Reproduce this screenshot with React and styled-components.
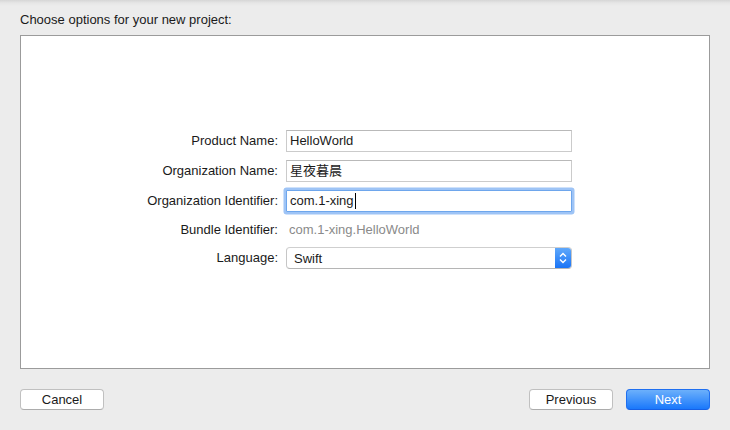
import styled, { createGlobalStyle } from 'styled-components';

const GlobalStyle = createGlobalStyle`
  html, body {
    margin: 0;
    padding: 0;
    background: #ececec;
    font-family: "Liberation Sans", "Noto Sans CJK SC", sans-serif;
    font-size: 13px;
    color: #1a1a1a;
  }
`;

const Sheet = styled.div`
  width: 730px;
  height: 430px;
  background: linear-gradient(#d6d6d6 0px, #e6e6e6 3px, #ececec 6px);
  display: flex;
  flex-direction: column;
`;

const Title = styled.div`
  height: 35px;
  padding-left: 20px;
  box-sizing: border-box;
  padding-top: 12px;
  line-height: 15px;
`;

const Panel = styled.div`
  margin: 0 20px 0 20px;
  width: 690px;
  height: 334px;
  box-sizing: border-box;
  background: #fff;
  border: 1px solid #9b9b9b;
  padding-top: 94px;
`;

const Form = styled.div`
  display: grid;
  grid-template-columns: 257px 286px;
  grid-template-rows: 22px 22px 22px 19px 22px;
  column-gap: 8px;
  row-gap: 8px;
`;

const Label = styled.label`
  text-align: right;
  align-self: center;
  line-height: 16px;
`;

const Field = styled.div`
  box-sizing: border-box;
  height: 22px;
  border: 1px solid ${p => (p.$focused ? '#6ea6ec' : '#cbcbcb')};
  border-top-color: ${p => (p.$focused ? '#6ea6ec' : '#b9b9b9')};
  box-shadow: ${p => (p.$focused ? '0 0 0 2.5px #9ec4f6' : 'none')};
  border-radius: ${p => (p.$focused ? '1px' : '0')};
  padding: 0 3px;
  display: flex;
  align-items: center;
  line-height: 16px;
  background: #fff;
`;

const Caret = styled.span`
  display: inline-block;
  width: 1px;
  height: 16px;
  background: #000;
  margin-left: 1px;
`;

const Plain = styled.div`
  align-self: center;
  color: #8a8a8a;
  padding-left: 3px;
  line-height: 16px;
`;

const Popup = styled.div`
  box-sizing: border-box;
  height: 22px;
  border: 1px solid #c6c6c6;
  border-top-color: #cfcfcf;
  border-bottom-color: #b5b5b5;
  border-radius: 4px;
  display: flex;
  align-items: stretch;
  overflow: hidden;
  background: #fff;
`;

const PopupText = styled.div`
  flex: 1;
  padding-left: 7px;
  display: flex;
  align-items: center;
`;

const Stepper = styled.div`
  width: 16px;
  background: linear-gradient(#5fa8fb, #1a74f6);
  display: flex;
  align-items: center;
  justify-content: center;
`;

const Footer = styled.div`
  display: flex;
  align-items: center;
  padding: 20px 20px 0 20px;
  gap: 13px;
`;

const Spacer = styled.div`
  flex: 1;
`;

const Button = styled.button`
  box-sizing: border-box;
  width: 84px;
  height: 21px;
  border-radius: 4px;
  font-family: inherit;
  font-size: 13px;
  padding: 0;
  line-height: 18px;
  border: 1px solid ${p => (p.$primary ? '#1f6ff0' : '#c0c0c0')};
  border-bottom-color: ${p => (p.$primary ? '#1660e6' : '#acacac')};
  color: ${p => (p.$primary ? '#fff' : '#1a1a1a')};
  background: ${p => (p.$primary ? 'linear-gradient(#6cb0fb, #1a78fb)' : '#fff')};
`;

export default function App() {
  return (
    <>
      <GlobalStyle />
      <Sheet>
        <Title>Choose options for your new project:</Title>
        <Panel>
          <Form>
            <Label>Product Name:</Label>
            <Field>HelloWorld</Field>
            <Label>Organization Name:</Label>
            <Field>星夜暮晨</Field>
            <Label>Organization Identifier:</Label>
            <Field $focused>
              com.1-xing
              <Caret />
            </Field>
            <Label>Bundle Identifier:</Label>
            <Plain>com.1-xing.HelloWorld</Plain>
            <Label>Language:</Label>
            <Popup>
              <PopupText>Swift</PopupText>
              <Stepper>
                <svg width="8" height="12" viewBox="0 0 8 12">
                  <path d="M1 4.5 L4 1.5 L7 4.5 M1 7.5 L4 10.5 L7 7.5" fill="none" stroke="#fff" strokeWidth="1.4" />
                </svg>
              </Stepper>
            </Popup>
          </Form>
        </Panel>
        <Footer>
          <Button>Cancel</Button>
          <Spacer />
          <Button>Previous</Button>
          <Button $primary>Next</Button>
        </Footer>
      </Sheet>
    </>
  );
}
